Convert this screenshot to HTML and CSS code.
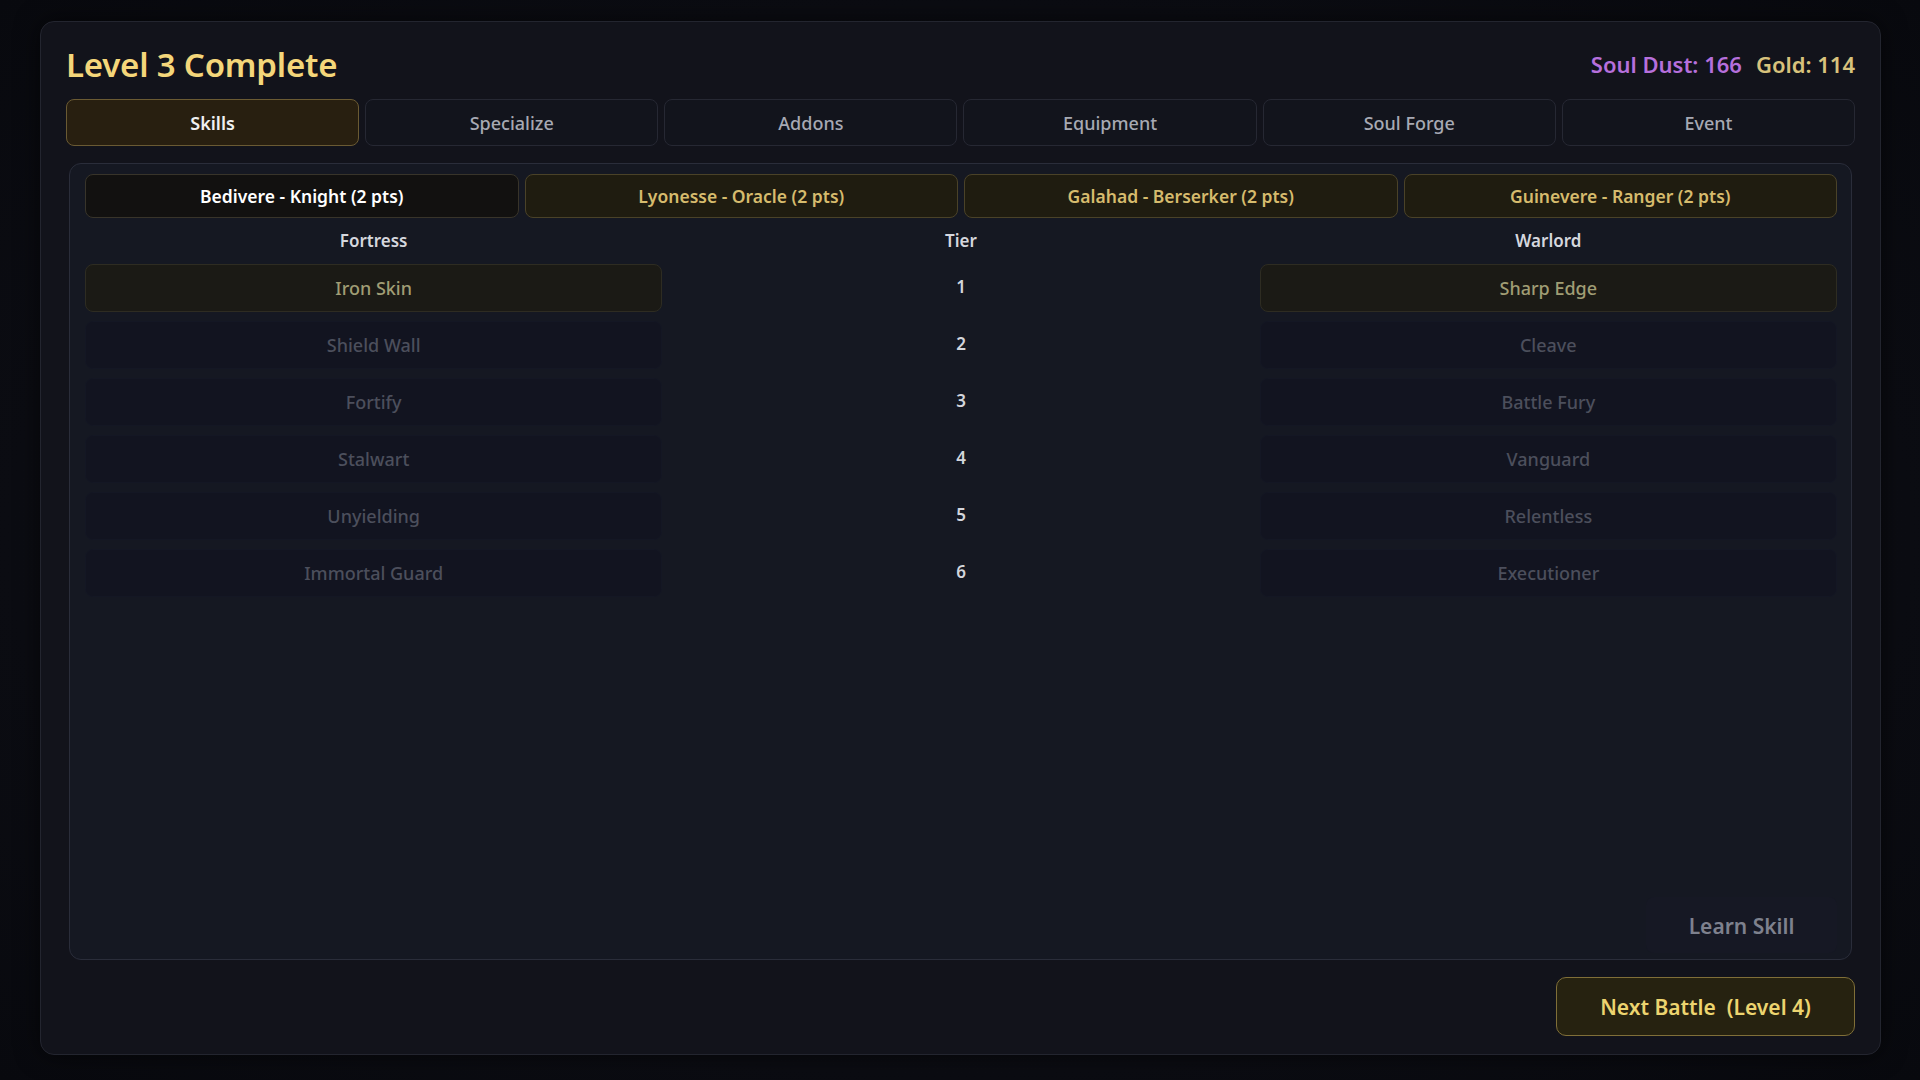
FILE: index.html
```html
<!DOCTYPE html>
<html lang="en">
<head>
    <meta charset="UTF-8">
    <meta name="viewport" content="width=device-width, initial-scale=1.0">
    <title>Level 3 Complete</title>
    <link rel="stylesheet" href="styles.css">
</head>
<body>

    <div class="screen">
        <div class="panel">

            <div class="panel-head">
                <h1 class="title">Level 3 Complete</h1>
                <div class="currency">
                    <span class="soul-dust">Soul Dust: 166</span>
                    <span class="gold">Gold: 114</span>
                </div>
            </div>

            <nav class="tabs">
                <button class="tab active">Skills</button>
                <button class="tab">Specialize</button>
                <button class="tab">Addons</button>
                <button class="tab">Equipment</button>
                <button class="tab">Soul Forge</button>
                <button class="tab">Event</button>
            </nav>

            <div class="skills-panel">
                <div class="heroes">
                    <button class="hero active">Bedivere - Knight (2 pts)</button>
                    <button class="hero">Lyonesse - Oracle (2 pts)</button>
                    <button class="hero">Galahad - Berserker (2 pts)</button>
                    <button class="hero">Guinevere - Ranger (2 pts)</button>
                </div>

                <div class="skill-grid">
                    <div class="col-head">Fortress</div>
                    <div class="col-head">Tier</div>
                    <div class="col-head">Warlord</div>

                    <div class="skill open">Iron Skin</div>
                    <div class="tier">1</div>
                    <div class="skill open">Sharp Edge</div>

                    <div class="skill">Shield Wall</div>
                    <div class="tier">2</div>
                    <div class="skill">Cleave</div>

                    <div class="skill">Fortify</div>
                    <div class="tier">3</div>
                    <div class="skill">Battle Fury</div>

                    <div class="skill">Stalwart</div>
                    <div class="tier">4</div>
                    <div class="skill">Vanguard</div>

                    <div class="skill">Unyielding</div>
                    <div class="tier">5</div>
                    <div class="skill">Relentless</div>

                    <div class="skill">Immortal Guard</div>
                    <div class="tier">6</div>
                    <div class="skill">Executioner</div>
                </div>

                <div class="learn-row">
                    <button class="learn-btn">Learn Skill</button>
                </div>
            </div>

            <div class="footer">
                <button class="next-btn">Next Battle&nbsp; (Level 4)</button>
            </div>

        </div>
    </div>

</body>
</html>
```

FILE: styles.css
```css
/* Reset */
* {
    padding: 0;
    margin: 0;
    box-sizing: border-box;
}

body {
    font-family: "Noto Sans", "Open Sans", sans-serif;
    background-color: #0b0c12;
    color: #d5d7de;
    width: 1920px;
    height: 1080px;
    overflow: hidden;
}

button {
    font-family: inherit;
    cursor: pointer;
}

/* Outer frame */
.screen {
    height: 100%;
    padding: 21px 39px 25px 40px;
    background: radial-gradient(ellipse at center, #10111a 0%, #0b0c12 70%, #08090e 100%);
}

.panel {
    height: 100%;
    display: flex;
    flex-direction: column;
    padding: 20px 25px 18px 25px;
    background-color: #12131b;
    border: 1px solid #23252f;
    border-radius: 14px;
    box-shadow: 0 0 24px rgba(0, 0, 0, 0.6);
}

/* Header */
.panel-head {
    display: flex;
    justify-content: space-between;
    align-items: center;
    height: 44px;
    margin-bottom: 13px;
}

.title {
    font-size: 33px;
    font-weight: 600;
    color: #f4d67a;
    letter-spacing: -0.2px;
}

.currency {
    display: flex;
    gap: 14px;
    font-size: 22px;
    font-weight: 600;
}

.soul-dust {
    color: #b66fdc;
}

.gold {
    color: #d8c27c;
}

/* Main tabs */
.tabs {
    display: grid;
    grid-template-columns: repeat(6, 1fr);
    gap: 6px;
    margin-bottom: 17px;
}

.tab {
    height: 47px;
    font-size: 18px;
    font-weight: 500;
    color: #a7a9b3;
    background-color: #12141c;
    border: 1px solid #262833;
    border-radius: 8px;
}

.tab.active {
    color: #f0f0f0;
    font-weight: 600;
    background-color: #281f10;
    border-color: #6a5a33;
}

/* Skills panel */
.skills-panel {
    flex: 1;
    display: flex;
    flex-direction: column;
    margin: 0 3px;
    padding: 10px 14px 6px 15px;
    background-color: #151822;
    border: 1px solid #2a2d3a;
    border-radius: 12px;
}

.heroes {
    display: grid;
    grid-template-columns: repeat(4, 1fr);
    gap: 6px;
    margin-bottom: 8px;
}

.hero {
    height: 44px;
    font-size: 17.5px;
    font-weight: 600;
    color: #d6bb6d;
    background-color: #1f1c10;
    border: 1px solid #4a4228;
    border-radius: 8px;
}

.hero.active {
    color: #ffffff;
    background-color: #121110;
    border-color: #38342a;
}

/* Skill tree */
.skill-grid {
    display: grid;
    grid-template-columns: 1fr 1fr 1fr;
    grid-auto-rows: 48px;
    grid-template-rows: 29px;
    column-gap: 10px;
    row-gap: 9px;
}

.col-head {
    display: flex;
    align-items: center;
    justify-content: center;
    font-size: 17px;
    font-weight: 600;
    color: #d5d7de;
}

.skill {
    display: flex;
    align-items: center;
    justify-content: center;
    font-size: 18px;
    font-weight: 500;
    color: #4c4f5c;
    background-color: #121420;
    border: 1px solid #141724;
    border-radius: 8px;
}

.skill.open {
    color: #a09d74;
    background-color: #1b1a15;
    border-color: #2e2c22;
}

.tier {
    display: flex;
    align-items: center;
    justify-content: center;
    font-size: 17px;
    font-weight: 600;
    color: #d3d5dc;
    padding-bottom: 4px;
}

.learn-row {
    margin-top: auto;
    display: flex;
    justify-content: flex-end;
}

.learn-btn {
    width: 191px;
    height: 56px;
    padding-top: 2px;
    font-size: 21px;
    font-weight: 600;
    color: #7e818e;
    background-color: #161824;
    border: none;
    border-radius: 8px;
}

/* Footer */
.footer {
    display: flex;
    justify-content: flex-end;
    margin-top: 17px;
}

.next-btn {
    width: 299px;
    height: 59px;
    font-size: 21px;
    font-weight: 600;
    color: #ecd46f;
    background-color: #262210;
    border: 1px solid #806f38;
    border-radius: 10px;
}
```
